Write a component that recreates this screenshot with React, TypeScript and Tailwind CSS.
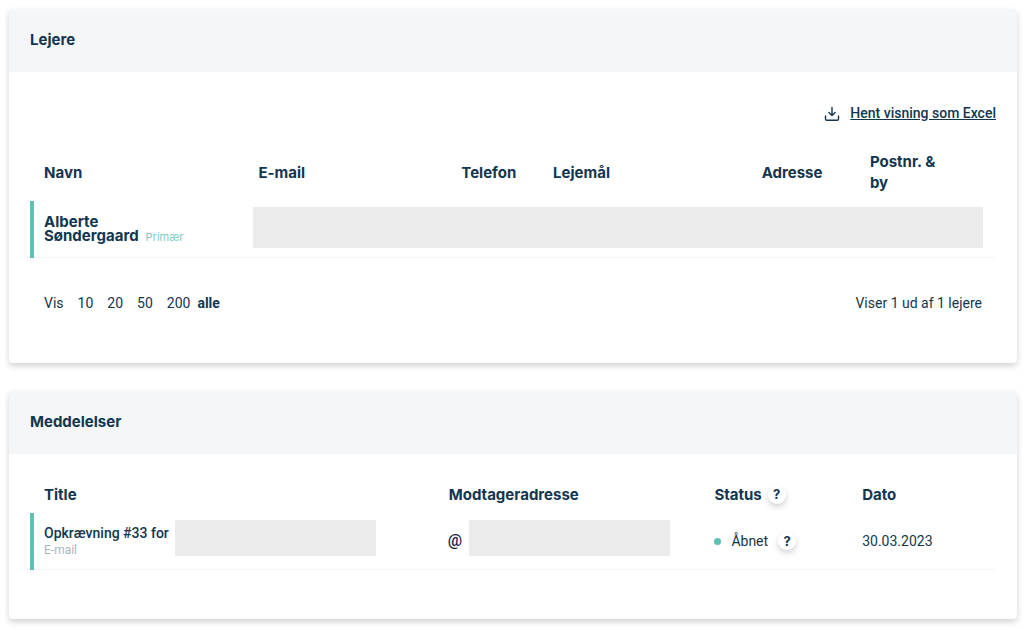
import type { ReactNode } from "react";

type CardProps = {
  title: string;
  children: ReactNode;
};

const pageSizes = ["10", "20", "50", "200"];

const headingFont = "font-[Inter,sans-serif]";

function Card({ title, children }: CardProps) {
  return (
    <section className="overflow-hidden rounded bg-white shadow-[0_3px_6px_rgba(0,0,0,0.18)]">
      <h2 className={`${headingFont} bg-[#f4f6f8] px-[21px] pt-5 pb-[22px] text-[15px] leading-[21px] font-bold`}>
        {title}
      </h2>
      <div className="px-[21px] pb-[49px]">{children}</div>
    </section>
  );
}

function HeaderCell({ className = "", children }: { className?: string; children: ReactNode }) {
  return (
    <th
      scope="col"
      className={`${headingFont} pt-1.5 pb-2 pl-3.5 text-left align-middle text-[15px] leading-[21px] font-bold ${className}`}
    >
      {children}
    </th>
  );
}

function HelpButton({ label }: { label: string }) {
  return (
    <button
      type="button"
      aria-label={label}
      className={`${headingFont} flex size-[18px] shrink-0 items-center justify-center rounded-full bg-white text-[13px] font-bold shadow-[0_3px_6px_rgba(0,0,0,0.18)]`}
    >
      ?
    </button>
  );
}

function DownloadIcon() {
  return (
    <svg
      className="size-4"
      viewBox="0 0 16 16"
      fill="none"
      stroke="currentColor"
      strokeWidth="1.4"
      strokeLinecap="round"
      strokeLinejoin="round"
      aria-hidden="true"
    >
      <path d="M8 1.4v8M4.9 6.5 8 9.5l3.1-3" />
      <path d="M1.5 10v3c0 .7.5 1.2 1.2 1.2h10.6c.7 0 1.2-.5 1.2-1.2v-3" />
    </svg>
  );
}

function Tenants() {
  return (
    <Card title="Lejere">
      <div className="flex justify-end pt-[31px] pb-[21px]">
        <a href="#excel" className="flex items-center gap-2.5 leading-[21px] font-medium">
          <DownloadIcon />
          <span className="underline">Hent visning som Excel</span>
        </a>
      </div>

      <table className="w-full table-fixed border-separate border-spacing-0">
        <thead>
          <tr>
            <HeaderCell className="w-[22.2%]">Navn</HeaderCell>
            <HeaderCell className="w-[21%]">E-mail</HeaderCell>
            <HeaderCell className="w-[9.5%]">Telefon</HeaderCell>
            <HeaderCell className="w-[21.6%]">Lejemål</HeaderCell>
            <HeaderCell className="w-[11.2%]">Adresse</HeaderCell>
            <HeaderCell className="pr-12">Postnr. &amp; by</HeaderCell>
          </tr>
        </thead>
        <tbody>
          <tr>
            <td className="border-l-4 border-[#5bc0b5] pl-2.5 align-middle shadow-[inset_0_-1px_0_#f4f6f8]">
              <div className={`${headingFont} text-[15px] leading-[14px] font-bold`}>
                Alberte
                <br />
                Søndergaard
                <span className="ml-[7px] text-[11px] font-normal text-[#7dcdc4]">Primær</span>
              </div>
            </td>
            <td colSpan={5} className="border-b border-[#f4f6f8] pt-1.5 pr-[13px] pb-[9px] pl-[9px]">
              <div className="h-[41px] bg-[#ebebeb]" />
            </td>
          </tr>
        </tbody>
      </table>

      <div className="flex items-center justify-between px-3.5 pt-[35px] leading-[21px]">
        <div className="flex">
          <span className="mr-3.5">Vis</span>
          <div className="flex gap-3.5">
            {pageSizes.map((size) => (
              <button key={size} type="button">
                {size}
              </button>
            ))}
          </div>
          <button type="button" aria-pressed="true" className="ml-[7px] font-bold">
            alle
          </button>
        </div>
        <p>Viser 1 ud af 1 lejere</p>
      </div>
    </Card>
  );
}

function Messages() {
  return (
    <Card title="Meddelelser">
      <table className="mt-6 w-full table-fixed border-separate border-spacing-0">
        <thead>
          <tr>
            <HeaderCell className="w-[41.9%]">Title</HeaderCell>
            <HeaderCell className="w-[27.5%]">Modtageradresse</HeaderCell>
            <HeaderCell className="w-[15.3%]">
              <div className="flex items-center gap-1.5">
                Status
                <HelpButton label="Hjælp til status" />
              </div>
            </HeaderCell>
            <HeaderCell>Dato</HeaderCell>
          </tr>
        </thead>
        <tbody>
          <tr>
            <td className="border-l-4 border-[#5bc0b5] pt-[7px] pb-3.5 pl-2.5 shadow-[inset_0_-1px_0_#f4f6f8]">
              <div className="flex items-end gap-1.5">
                <div className="whitespace-nowrap">
                  <div className="leading-[21px] font-medium">Opkrævning #33 for</div>
                  <div className="text-xs leading-[12px] text-[#a9b5bf]">E-mail</div>
                </div>
                <div className="h-9 w-[201px] bg-[#ebebeb]" />
              </div>
            </td>
            <td className="border-b border-[#f4f6f8] pt-[7px] pb-[13px] pl-[13px]">
              <div className="flex items-end gap-[7px]">
                <span className="text-base leading-[30px] font-medium text-[#1c1c44]">@</span>
                <div className="h-9 w-[201px] bg-[#ebebeb]" />
              </div>
            </td>
            <td className="border-b border-[#f4f6f8] pl-3.5">
              <div className="flex items-center">
                <span className="mr-2.5 size-[7px] rounded-full bg-[#5bc0b5]" />
                Åbnet
                <span className="ml-2.5">
                  <HelpButton label="Hjælp til åbnet" />
                </span>
              </div>
            </td>
            <td className="border-b border-[#f4f6f8] pl-3.5">30.03.2023</td>
          </tr>
        </tbody>
      </table>
    </Card>
  );
}

export default function App() {
  return (
    <main className="flex min-h-screen flex-col gap-7 bg-white p-[9px] font-['Roboto',sans-serif] text-sm text-[#12364f]">
      <Tenants />
      <Messages />
    </main>
  );
}
